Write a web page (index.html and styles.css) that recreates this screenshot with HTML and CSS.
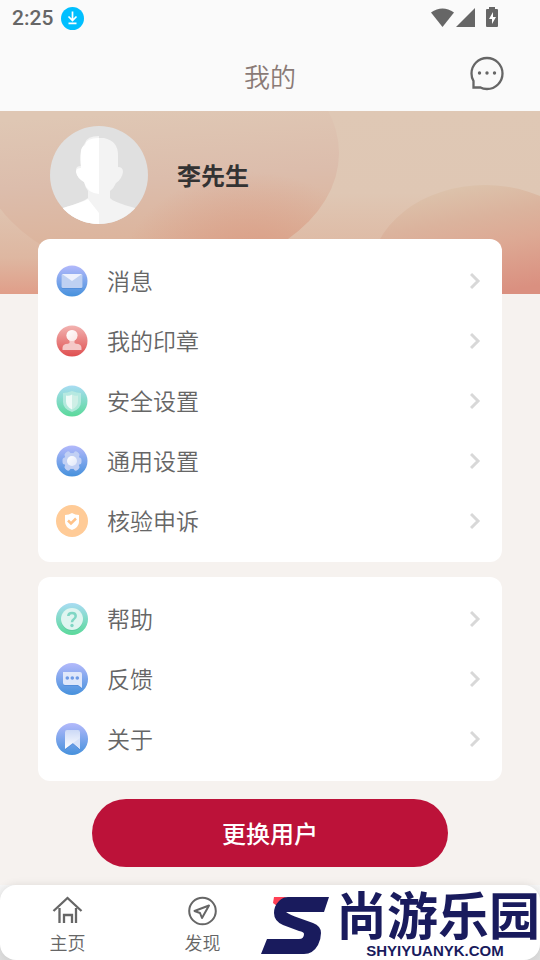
FILE: index.html
```html
<!DOCTYPE html>
<html lang="zh-CN">
<head>
<meta charset="utf-8">
<meta name="viewport" content="width=device-width, initial-scale=1">
<title>我的</title>
<link rel="stylesheet" href="styles.css">
</head>
<body>
<svg class="defs" width="0" height="0" aria-hidden="true">
  <defs>
    <linearGradient id="blue" x1="0" y1="0" x2="0" y2="1"><stop offset="0" stop-color="#b3b9fb"/><stop offset="1" stop-color="#4691dc"/></linearGradient>
    <linearGradient id="red" x1="0" y1="0" x2="0" y2="1"><stop offset="0" stop-color="#f2b3b1"/><stop offset="1" stop-color="#df4f50"/></linearGradient>
    <linearGradient id="green" x1="0" y1="0" x2="0" y2="1"><stop offset="0" stop-color="#a9dcf3"/><stop offset="1" stop-color="#5ad99a"/></linearGradient>
    <linearGradient id="fade" x1="0" y1="0" x2="1" y2="1"><stop offset="0" stop-color="#fff"/><stop offset="1" stop-color="#fff" stop-opacity=".5"/></linearGradient>
    <linearGradient id="ribbon" x1="0" y1="0" x2="0" y2="1"><stop offset="0" stop-color="#ccd9f6"/><stop offset="1" stop-color="#fff"/></linearGradient>
    <symbol id="chevron" viewBox="0 0 12 18"><path d="M1 2l7 7-7 7" fill="none" stroke="#d8d8d8" stroke-width="3"/></symbol>
  </defs>
</svg>

<header class="top">
  <div class="status">
    <span class="clock">2:25</span>
    <svg width="24" height="24" viewBox="0 0 24 24" aria-hidden="true"><circle cx="12.500" cy="12.500" r="11.500" fill="#00bfff"/><path d="M12.500 5.500v8M8.500 10.500l4 4 4-4M8.500 17.300h8" fill="none" stroke="#fff" stroke-width="1.700"/></svg>
    <svg class="signals" width="70" height="22" viewBox="0 0 70 22" aria-hidden="true">
      <g fill="#666"><path d="M0 5.500Q11.500-2.500 23 5.500L11.500 20z"/><path d="M44 1v19H25z"/><path d="M58 0h6v2h2q1 0 1 1v16q0 1-1 1H56q-1 0-1-1V3q0-1 1-1h2z"/></g>
      <path d="M62 5l-4 7h3v5l4-7h-3z" fill="#fff"/>
    </svg>
  </div>
  <div class="titlebar">
    <h1>我的</h1>
    <button class="chat" type="button" aria-label="在线客服">
      <svg width="36" height="36" viewBox="0 0 36 36"><path d="M4.500 25V31.500H11.500Q14 33 18 33A15.500 15.500 0 1 0 2.500 17.500Q2.500 22 4.500 25z" fill="none" stroke="#666" stroke-width="2.300"/><g fill="#666"><circle cx="10.500" cy="17" r="1.700"/><circle cx="18" cy="17" r="1.700"/><circle cx="25.500" cy="17" r="1.700"/></g></svg>
    </button>
  </div>
</header>

<main>
  <section class="profile">
    <svg class="backdrop" viewBox="0 0 540 183" preserveAspectRatio="none" aria-hidden="true">
      <defs>
        <linearGradient id="sky" x1="0" y1="0" x2="0" y2="1"><stop offset="0" stop-color="#dfc8b5"/><stop offset=".45" stop-color="#dfc7b4"/><stop offset=".8" stop-color="#deb7a1"/><stop offset="1" stop-color="#e09e89"/></linearGradient>
        <linearGradient id="left" gradientUnits="userSpaceOnUse" x1="150" y1="0" x2="160" y2="150"><stop offset="0" stop-color="#dfc7b4"/><stop offset=".45" stop-color="#dcbdac"/><stop offset="1" stop-color="#dcb197"/></linearGradient>
        <radialGradient id="glow" gradientUnits="userSpaceOnUse" cx="250" cy="165" r="130" gradientTransform="translate(0 33) scale(1 .8)"><stop offset=".2" stop-color="#da967e" stop-opacity=".7"/><stop offset="1" stop-color="#da967e" stop-opacity="0"/></radialGradient>
        <linearGradient id="right" gradientUnits="userSpaceOnUse" x1="470" y1="74" x2="490" y2="183"><stop offset="0" stop-color="#dcc2ab"/><stop offset=".3" stop-color="#dbb39d"/><stop offset=".55" stop-color="#dda994"/><stop offset="1" stop-color="#da9080"/></linearGradient>
      </defs>
      <path d="M0 0h540v183H0z" fill="url(#sky)"/>
      <ellipse cx="160" cy="42" rx="179" ry="123" fill="url(#left)"/>
      <ellipse cx="160" cy="42" rx="179" ry="123" fill="url(#glow)"/>
      <ellipse cx="485" cy="165" rx="115" ry="91" fill="url(#right)"/>
    </svg>
    <svg class="avatar" viewBox="0 0 98 98" role="img" aria-label="头像">
      <defs><clipPath id="disc"><circle cx="49" cy="49" r="49"/></clipPath></defs>
      <g clip-path="url(#disc)">
        <path d="M0 0h98v98H0z" fill="#e0e0e0"/>
        <path d="M49 12h5q14 3 14 17v12q5 0 5 5-1 7-7 11-2 5-6 8v7q3 4 25 10l10 18H5l8-18q20-6 25-10v-7q-3-4-4-9-7-4-8-12 0-4 5-4-1-10 0-16 2-4 4-7 2-7 14-7z" fill="#f3f3f3"/>
        <path d="M49 12v56q-12-1-15-12-7-4-8-10 0-4 5-4-1-10 0-16 0-5 4-7 1-7 14-7z" fill="#fff"/>
        <path d="M38 73l11 14v11H5l8-16q20-6 25-9z" fill="#fff"/>
      </g>
    </svg>
    <h2>李先生</h2>
  </section>

  <nav class="card" aria-label="个人设置">
    <a class="row" href="#messages">
      <svg class="icon" viewBox="0 0 32 32"><circle cx="16" cy="16" r="15.500" fill="url(#blue)"/><rect x="5.500" y="10" width="21" height="14" rx="1.500" fill="#2f70c8" opacity=".3"/><rect x="5.500" y="9" width="21" height="14" rx="1.500" fill="#bed0f2"/><path d="M6 9h20l-10 7z" fill="#edf1fd"/></svg>
      <span>消息</span><svg class="arrow"><use href="#chevron"/></svg></a>
    <a class="row" href="#seals">
      <svg class="icon" viewBox="0 0 32 32"><circle cx="16" cy="16" r="15.500" fill="url(#red)"/><path d="M13.500 14h5v4q1 1 4 1 3 1 3 4v2H6.500v-2q0-3 3-4 3 0 4-1z" fill="#f5c8c8"/><circle cx="16" cy="10.500" r="5.500" fill="#f6cccb"/><circle cx="16" cy="10.500" r="5.500" fill="url(#fade)"/></svg>
      <span>我的印章</span><svg class="arrow"><use href="#chevron"/></svg></a>
    <a class="row" href="#security">
      <svg class="icon" viewBox="0 0 32 32"><circle cx="16" cy="16" r="15.500" fill="url(#green)"/><path d="M16 6q5 2 9 2v9q0 7-9 10-9-3-9-10V8q4 0 9-2z" fill="#bcebe2" opacity=".85"/><path d="M16 9.500v15q-6-3-6-8v-6q3 1 6-1z" fill="#effbf8"/><path d="M16 9.500q3 2 6 1v6q0 5-6 8z" fill="#ceefe6"/></svg>
      <span>安全设置</span><svg class="arrow"><use href="#chevron"/></svg></a>
    <a class="row" href="#general">
      <svg class="icon" viewBox="0 0 32 32"><circle cx="16" cy="16" r="15.500" fill="url(#blue)"/><g fill="#c1d0f4" stroke="#c1d0f4" stroke-width="5" stroke-linejoin="round"><circle cx="16" cy="16" r="5.500"/><path d="M9 15v2h14v-2zM12 9l-1 1 9 13 1-1zM20 9l1 1-9 13-1-1z"/></g><circle cx="16" cy="16" r="5" fill="url(#fade)"/></svg>
      <span>通用设置</span><svg class="arrow"><use href="#chevron"/></svg></a>
    <a class="row" href="#appeal">
      <svg class="icon" viewBox="0 0 32 32"><circle cx="16" cy="16" r="16" fill="#ffcb97"/><path d="M16 8q3 2 7 2v7q0 5-7 8-7-3-7-8v-7q4 0 7-2z" fill="#fff"/><path d="M12 15.500l3 3 5-5" fill="none" stroke="#ffc288" stroke-width="2.500"/></svg>
      <span>核验申诉</span><svg class="arrow"><use href="#chevron"/></svg></a>
  </nav>

  <nav class="card" aria-label="支持">
    <a class="row" href="#help">
      <svg class="icon" viewBox="0 0 32 32"><circle cx="16" cy="16" r="16" fill="url(#green)"/><circle cx="16" cy="17" r="11" fill="#3fae86" opacity=".3"/><circle cx="16" cy="16" r="11" fill="#dff5f0"/><path d="M12.300 13q.2-3 3.700-3 3.700 0 3.700 3 0 2-2 3.200-1.700 1.100-1.700 3.100" fill="none" stroke="#80d7c4" stroke-width="2.500"/><circle cx="16" cy="22.500" r="1.700" fill="#80d7c4"/></svg>
      <span>帮助</span><svg class="arrow"><use href="#chevron"/></svg></a>
    <a class="row" href="#feedback">
      <svg class="icon" viewBox="0 0 32 32"><circle cx="16" cy="16" r="16" fill="url(#blue)"/><path d="M7 10h17q2 0 2 2v14l-4-3H9q-2 0-2-2z" fill="#3474c9" opacity=".35"/><path d="M7 9h17q2 0 2 2v14l-4-3H9q-2 0-2-2z" fill="#dfe7fa"/><g fill="#6d9ae6"><circle cx="11.300" cy="15" r="1.800"/><circle cx="16.300" cy="15" r="1.800"/><circle cx="21.300" cy="15" r="1.800"/></g></svg>
      <span>反馈</span><svg class="arrow"><use href="#chevron"/></svg></a>
    <a class="row" href="#about">
      <svg class="icon" viewBox="0 0 32 32"><circle cx="16" cy="16" r="16" fill="url(#blue)"/><path d="M9 8h15v19l-7-6-8 6z" fill="#3474c9" opacity=".35"/><path d="M9 9q0-2 2-2h11q2 0 2 2v17l-7-6-8 6z" fill="url(#ribbon)"/><path d="M24 15v11l-7-6z" fill="#d8e3f9"/></svg>
      <span>关于</span><svg class="arrow"><use href="#chevron"/></svg></a>
  </nav>

  <button class="switch" type="button">更换用户</button>
</main>

<footer>
  <nav class="tabs" aria-label="主导航">
    <a href="#home"><svg width="32" height="32" viewBox="0 0 32 32"><path d="M1.500 16L15.500 3l14 13M7.500 13v15M24 13v15M12 28v-8h8v8" fill="none" stroke="#666" stroke-width="2.300"/></svg>主页</a>
    <a href="#discover"><svg width="32" height="32" viewBox="0 0 32 32"><circle cx="15.500" cy="16" r="13.300" fill="none" stroke="#666" stroke-width="2"/><path d="M22 10.500L7.500 16l5.500 2 2 5z" fill="none" stroke="#666" stroke-width="2" stroke-linejoin="round"/></svg>发现</a>
  </nav>
  <div class="brand">
    <svg width="70" height="60" viewBox="0 0 70 60" aria-hidden="true"><path d="M13 0h12L16 9l-4-3z" fill="#ff4055"/><path d="M27 0H68L63 15H25Q29 18 38 21L52 26Q60 29 60 36 60 42 57 48 52 57 43 57H0L6 42H38Q43 42 43 37 43 35 38 34L22 28Q13 24 13 16 13 9 18 4 22 0 27 0z" fill="#191b5d"/></svg>
    <div class="wordmark"><strong>尚游乐园</strong><span>SHYIYUANYK.COM</span></div>
  </div>
</footer>
</body>
</html>
```

FILE: styles.css
```css
* {
  box-sizing: border-box;
}

body {
  margin: 0;
  min-height: 100vh;
  display: flex;
  flex-direction: column;
  background: #f6f2ef;
  color: #666;
  font-family: Roboto, "Noto Sans CJK SC", sans-serif;
  font-weight: 350;
}

svg {
  display: block;
  flex: none;
}

a {
  color: inherit;
  text-decoration: none;
}

button {
  border: 0;
  padding: 0;
  font-family: inherit;
  cursor: pointer;
}

h1,
h2 {
  margin: 0;
}

.defs {
  position: absolute;
}

.top {
  background: #fafafa;
}

.status {
  display: flex;
  align-items: center;
  height: 36px;
  padding: 0 39px 0 12px;
  gap: 7px;
}

.clock {
  font-size: 21px;
  font-weight: 500;
}

.signals {
  margin-left: auto;
}

.titlebar {
  display: grid;
  grid-template-columns: 36px 1fr 36px;
  align-items: center;
  height: 75px;
  padding: 0 35px;
}

h1 {
  grid-column: 2;
  text-align: center;
  color: #8a7a76;
  font-size: 26px;
  font-weight: 350;
  line-height: 30px;
  padding-top: 8px;
}

.chat {
  background: none;
}

.profile {
  position: relative;
  display: flex;
  align-items: center;
  gap: 29px;
  height: 183px;
  padding: 0 50px 56px;
}

.backdrop {
  position: absolute;
  inset: 0;
  width: 100%;
  height: 100%;
}

.avatar {
  position: relative;
  width: 98px;
  height: 98px;
}

h2 {
  position: relative;
  color: #333;
  font-size: 24px;
  font-weight: 700;
}

.card {
  position: relative;
  margin: 0 38px 15px;
  padding: 12px 20px 12px 18px;
  border-radius: 12px;
  background: #fff;
}

.profile + .card {
  margin-top: -55px;
  padding-bottom: 11px;
}

.row {
  display: flex;
  align-items: center;
  gap: 19px;
  height: 60px;
  font-size: 23px;
}

.row span {
  padding-bottom: 2px;
}

.icon {
  width: 32px;
  height: 32px;
}

.arrow {
  width: 12px;
  height: 18px;
  margin-left: auto;
}

.switch {
  display: block;
  width: 66%;
  height: 68px;
  margin: 18px auto;
  padding-bottom: 2px;
  border-radius: 34px;
  background: #bc1239;
  color: #fff;
  font-size: 24px;
  font-weight: 500;
}

footer {
  position: relative;
  margin-top: auto;
  background: linear-gradient(#f6f6f6, #ddd);
}

.tabs {
  display: grid;
  grid-template-columns: repeat(4, 1fr);
  height: 75px;
  padding-top: 10px;
  border-radius: 16px;
  background: #fff;
  box-shadow: 0 0 8px rgba(0, 0, 0, 0.1);
}

.tabs a {
  display: flex;
  flex-direction: column;
  align-items: center;
  gap: 5px;
  font-size: 18px;
  line-height: 24px;
}

.brand {
  position: absolute;
  right: 0;
  bottom: 0;
  display: flex;
  align-items: center;
  gap: 5px;
  color: #191b5d;
}

.wordmark {
  display: flex;
  flex-direction: column;
  align-items: center;
}

.wordmark strong {
  font-size: 51px;
  font-weight: 700;
  line-height: 48px;
}

.wordmark span {
  padding-right: 6px;
  font-family: "Liberation Sans", sans-serif;
  font-size: 15px;
  font-weight: 700;
  line-height: 18px;
}
```
